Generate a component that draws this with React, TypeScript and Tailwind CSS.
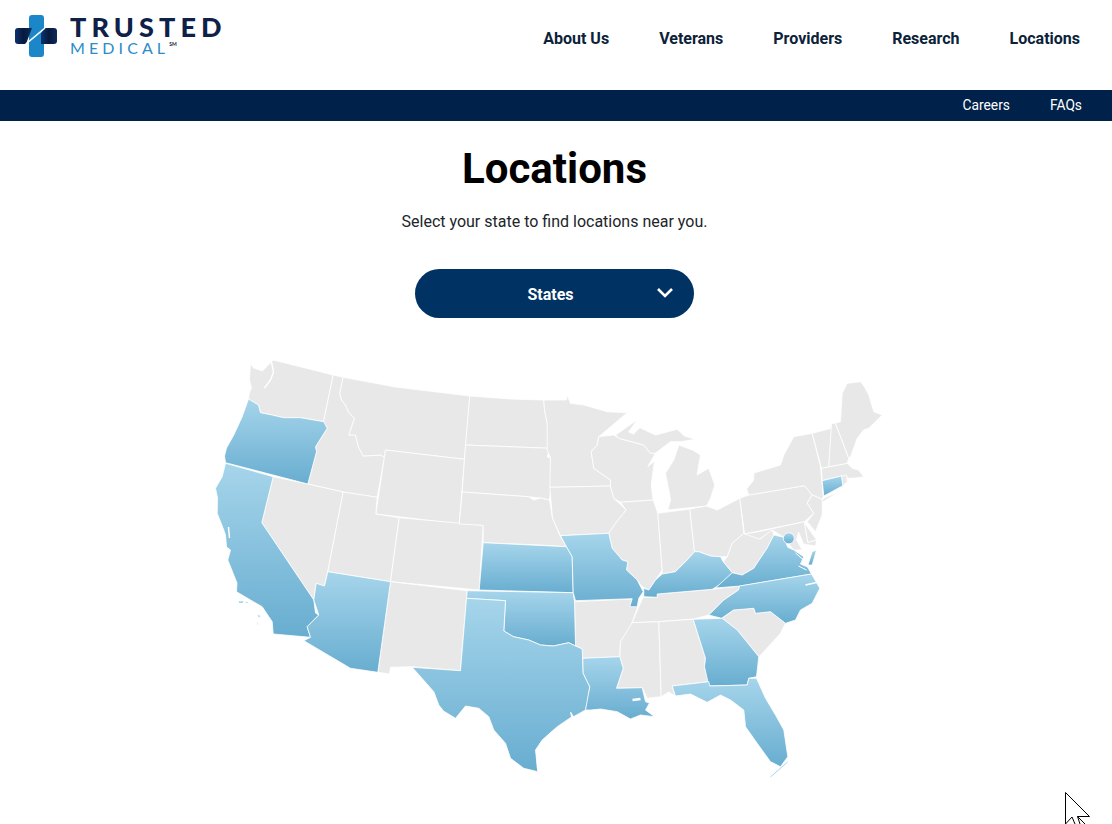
const font = { fontFamily: 'Roboto, sans-serif' };

const navLinks = ['About Us', 'Veterans', 'Providers', 'Research', 'Locations'];

// outlines are in page pixels, the svg viewBox starts where the svg sits on the page
const greyStates: string[] = [
  // WA
  '250,363 253,368 262,371 272.7,360 332.7,375 323,421.7 300,417.7 283,417.7 271.7,415 260,412.7 258,405 248,399 249,392 251,388 249,380',
  // ID
  '332.7,375 342.7,377.3 339.3,393.3 341,400 345,405 348,412 354,418.3 348.3,435 355,435 358,447 362.7,456 380,455 384,457.3 376.7,497.3 342.7,492 307.3,484 316,451.7 315,446.7 326.7,428.3 323,421.7',
  // MT
  '342.7,377.3 395,387 469.3,396 464,459.3 385,450 384,457.3 380,455 362.7,456 358,447 355,435 348.3,435 354,418.3 348,412 345,405 341,400 339.3,393.3',
  // WY
  '385,450 464,459.3 458.7,524 375.3,514',
  // NV
  '272.7,476.7 307.3,484 342.7,492 327.3,571.7 324,586 315.7,583.3 313.3,600 261.3,522.7',
  // UT
  '342.7,492 376.7,497.3 375.3,514 398.7,517.7 390,581.7 327.3,571.7',
  // CO
  '398.7,517.7 482.7,525.3 478.7,590 390,581.7',
  // NM
  '390,581.7 466.7,590.7 466,598.3 460,670.7 411.7,666.7 390,667.3 389,674 377.3,672.3',
  // ND
  '469.3,396 510,399 543.3,400 544,410 546.7,423 549.3,448.3 465,445',
  // SD
  '465,445 549.3,448.3 546.7,456.7 550,458 550,490 549,500 540,498 528,496.7 461.7,492',
  // NE
  '461.7,492 528,496.7 533.3,500 540,498 549,500 552,518 560,536.7 566,546.7 540,545 482.7,542.7 482.7,525.3 458.7,524',
  // MN
  '543.3,400 566,400 566,394 570,403.3 583.3,405 606.7,411.7 626.7,412.7 598.3,436.7 596.7,445 590.7,451.7 593.3,468.3 610,480 610,486 549.3,487.3 550,458 546.7,450 546.7,423 544,410',
  // IA
  '549.3,487.3 610,486 613.3,498.3 625.7,510 615,523.3 608.3,533.3 560,535.7 552,518',
  // WI
  '598.3,436.7 613.3,435 618.3,438.3 643.3,445 650,453.3 655,453 647.3,466.7 654,461 650.7,485 652.7,500 620,502.3 613.3,498.3 610,486 610,480 593.3,468.3 590.7,451.7 596.7,445',
  // MI upper
  '615,435 636.7,420 628,432 633,434 646.7,420.7 640,428 655,435 676.7,429.3 684,436 695,439.3 680,441.7 670,441.7 655,453 650,453.3 643.3,445 618.3,438.3',
  // MI lower
  '678.3,445 692,450 700,455 698,466 696.7,475 708.3,468.3 714.3,485 710,498.3 706,506 667.3,510 670,500 669.3,495 665,473.3 673.3,460',
  // IL
  '620,502.3 652.7,500 657.3,513.3 661.7,570 655,580 648.3,590 641.7,586.7 636.7,580 626,570 627.3,561.7 621.7,560 611.7,548.3 608.3,533.3 615,523.3 625.7,510',
  // IN
  '657.3,513.3 689.3,509 694,551.7 686.7,560 675,571.7 661.7,574 661.7,570',
  // OH
  '689.3,509 706,506 716.7,510 739.3,498.3 743.3,533.3 731.7,543.3 726.7,556.7 720,556.7 710,556 698.3,551.7 694,551.7',
  // AR
  '574,601.7 631.7,599 630,606 637.3,606.7 630,626.7 620,641.7 619.3,656.7 582.3,658.3 581.7,649 575,646',
  // TN
  '642.7,597.3 656.7,597.3 656.7,594 711.7,589.3 739,586 738,590 723.3,600 708.3,615 693.3,619 658.3,621.7 631.7,622.7 638.3,606.7',
  // MS
  '631.7,622.7 658.3,621.7 660.7,696.7 646.7,698.3 641.7,687.7 616,688.3 622.7,668.3 619.3,656.7 620,641.7',
  // AL
  '658.3,621.7 692.7,619.3 705,658.3 704,666.7 708,681.7 671.7,686 675,696 668,692 660.7,696.7',
  // SC
  '721.7,618.3 733,610 753,608.3 755,613.3 770,611.7 785,623.3 780,633.3 763.3,651.7 758.3,656.7 736.7,630',
  // WV
  '743.3,533.3 758.3,531.7 759.3,539.3 771.7,529.3 773.3,535 766.7,548 756.7,563 753.3,568.3 741.7,575 731.7,572.7 722.7,561.7 726.7,556.7 731.7,543.3',
  // PA
  '739.3,498.3 748.3,495 804,485.7 811.7,495 806.7,503 813.3,513.3 804,521.7 744,534',
  // NY
  '748.3,495 746,489 753.3,480 753.3,473 780,465 783.3,455 793.3,436.7 811.7,433.3 820,466.7 822.7,496.7 821.7,499.3 811.7,495 804,485.7',
  // Long Island
  '820,503.3 841.7,490 823.3,498.3',
  // NJ
  '811.7,495 821.7,499.3 821.7,515 815,531.7 806.7,521.7 813.3,513.3 806.7,503',
  // MD
  '744,534 758,531.7 804,521.7 807.3,542.3 816,540 815,546 803,544 798,532 796,540 801.7,550 793.3,550 783.3,537.3 771.7,530 759,539',
  // DE
  '804,522.7 816,540 807.3,542.3',
  // MA
  '821,468.3 846.7,463.3 851.7,468.3 858,470 863.3,476.7 855,478 848.3,478.3 841,476 821.7,480.7',
  // RI
  '841,476 846,475 846.7,481.7 842.3,485.7',
  // VT
  '811.7,433.3 831,428.3 828.3,466.7 821,468.3',
  // NH
  '831,423.3 835,423.3 848.3,458.3 846.7,463.3 828.3,466.7',
  // ME
  '835,423.3 840,421.7 841.7,393.3 846.7,383.3 860,381.7 864,387 868.3,395 873.3,411.7 881.7,415 868.3,428.3 863,430 856.7,438.3 850,456.7 848.3,458.3',
];

const blueStates: string[] = [
  // OR
  '248,399 258,405 260,412.7 271.7,415 283,417.7 300,417.7 323.3,421.7 326.7,428.3 315,446.7 316,451.7 307.3,484 225,462.7 224,456 226,448 233.3,435 241.7,416.7',
  // CA
  '225,463.3 272.7,476.7 261.3,522.7 313.3,600 315,613 318.3,615 306.7,626.7 310,637.3 272.7,634 271.7,621.7 261.7,606.7 250,600 236,591.7 236.5,583 227.3,560 230,550 226,547 225,535 223.3,530 216.7,513.3 217,498 215,488.3 221.7,476.7',
  // AZ
  '327.3,571.7 390,581.7 377.3,672.3 350,668.3 303.3,640.7 310,637.3 306.7,626.7 318.3,615 313.3,600 315.7,583.3 324,586',
  // KS
  '482.7,542.7 566,546.7 571.7,556.7 572.7,592.7 478.7,590',
  // OK
  '466.7,590.7 572.7,592.7 574,601.7 575,646 568.3,642.7 553,646 540,645 528.3,640 513,636.7 503.3,631 505,600.7 466,598.3',
  // TX
  '466,598.3 505,600.7 503.3,631 513,636.7 528.3,640 540,645 553,646 568.3,642.7 575,646 581.7,649 582.7,673.3 589.3,686.7 586.7,703.3 585,710 573,716.7 570,712 571,717 556.7,726.7 541.7,740 535,750 537.3,771.7 523.3,768.3 510,758.3 505,743.3 493.3,730 488.3,716.7 478.3,708.3 465,706 455,718.3 443,711 438.3,705 433.3,691.7 411.7,667.3 460,670.7',
  // LA
  '582.3,658.3 619.3,656.7 622.7,668.3 616,688.3 641.7,687.7 645,701.7 649,703 645,710 654,716.7 640,715 630,719 616.7,711.7 600,709 590,710 585,710 589.3,686.7 582.7,673.3',
  // MO
  '560,535.7 608.3,533.3 611.7,548.3 621.7,560 627.3,561.7 626,570 636.7,580 642.7,591.7 638.3,598.3 636.7,606.7 629.3,606.7 631.7,598.7 575,600.7 572.7,592.7 571.7,556.7 566,546.7',
  // KY
  '694,551.7 698.3,551.7 710,556 720,556.7 722.7,561.7 731.7,572.7 721.7,583.3 711.7,589.3 656.7,594 656.7,597.3 643.3,596.7 643.3,588.3 648.3,590 655,580 661.7,574 675,571.7 686.7,560',
  // VA
  '715,588 731.7,572.7 741.7,575 753.3,568.3 756.7,563 766.7,548 773.3,535 783.3,537.3 787.3,547.3 793.3,550 803.3,556.7 800,564 807,567 811,574 740,586',
  // VA eastern shore
  '811.7,551.7 816,550 811.7,565 807.5,565',
  // NC
  '739,586 811,574 819.3,588.3 811.7,603.3 800,610 795,620 785,623.3 770,611.7 755,613.3 753.3,608.3 733,610 721,618.3 708.3,615 723.3,600 738,590',
  // GA
  '692.7,619.3 721.7,618.3 736.7,630 758.3,656.7 756,676.7 748.3,678.3 746.7,685 708.3,686 704,666.7 705,658.3',
  // FL
  '671.7,686 708.3,681.7 709.3,686 746.7,685 748.3,678.3 756,678.3 765,698.3 775,715 783.3,730 787.3,756.7 780,766.7 770,761.7 756.7,743.3 745,726.7 743.3,710 730,700 720,695 706.7,702.3 690,694 675,696',
  // CT
  '821.7,480.7 841,476 842.3,485.7 823.3,496',
  // Channel Islands
  '238,601 243,601 243,603 238,603',
  '245,601.5 248,602 248,603 245,603',
  '257,614 260,616 258,618',
  '256,622 258,624 257,625',
];

export default function App() {
  return (
    <div className="relative h-[824px] w-[1112px] overflow-hidden bg-white" style={font}>
      <header className="flex h-[90px] items-start justify-between">
        <div className="flex pl-[15px] pt-[15px]">
          <svg width="43" height="43" viewBox="0 0 43 43">
            <defs>
              <linearGradient id="navyBar" x1="0" x2="1" y1="0" y2="0">
                <stop offset="0" stopColor="#0d3270" />
                <stop offset="0.5" stopColor="#071a3e" />
                <stop offset="1" stopColor="#0d2a5c" />
              </linearGradient>
            </defs>
            <rect x="14" y="0" width="15" height="42" rx="3" fill="#1b87c9" />
            <path d="M3 13 H17 L11 29 H3 Q0 29 0 26 V16 Q0 13 3 13 Z" fill="url(#navyBar)" />
            <path d="M29 13 H39 Q42 13 42 16 V26 Q42 29 39 29 H26 V19 Z" fill="url(#navyBar)" />
            <path d="M30 13 L11 29 L9 33" fill="none" stroke="#fff" strokeWidth="1.6" />
          </svg>
          <div className="ml-[12px] -mt-[1px] flex flex-col">
            <span
              className="text-[27px] leading-[26px] font-black tracking-[5.1px] text-[#0e2148]"
              style={{ fontFamily: 'Lato, sans-serif' }}
            >
              TRUSTED
            </span>
            <span
              className="flex items-start text-[16px] leading-[15px] font-normal tracking-[4.1px] text-[#2b8cc8]"
              style={{ fontFamily: 'Lato, sans-serif' }}
            >
              MEDICAL
              <span className="mt-[1px] text-[5px] leading-[6px] tracking-normal font-bold text-[#0e2148]">SM</span>
            </span>
          </div>
        </div>
        <nav className="flex gap-[50px] pr-[32px] pt-[29px]">
          {navLinks.map((link) => (
            <a key={link} className="text-[16px] leading-[19px] font-bold text-[#0b2239]">
              {link}
            </a>
          ))}
        </nav>
      </header>

      <div className="flex h-[31px] items-center justify-end gap-[40px] bg-[#00214a] pr-[30px] text-[13.8px] text-white">
        <a>Careers</a>
        <a>FAQs</a>
      </div>

      <main className="flex w-[1109px] flex-col items-center">
        <h1 className="mt-[24px] text-[42px] leading-[48px] font-bold text-black">Locations</h1>
        <p className="mt-[17px] text-[16px] leading-[24px] text-[#212529]">
          Select your state to find locations near you.
        </p>
        <button className="relative mt-[35px] flex h-[49px] w-[279px] items-center justify-center rounded-full bg-[#003263] pr-[8px] pt-[3px] text-[16px] font-bold text-white">
          States
          <svg
            className="absolute left-[242px] top-[18px]"
            width="16"
            height="11"
            viewBox="0 0 16 11"
            fill="none"
            stroke="#fff"
            strokeWidth="2.6"
          >
            <path d="M1 2 L8 9 L15 2" />
          </svg>
        </button>

        <svg className="mt-[32px] block" width="700" height="440" viewBox="204.5 350 700 440">
          <defs>
            <linearGradient id="stateBlue" x1="0" x2="0" y1="0" y2="1">
              <stop offset="0" stopColor="#a6d5eb" />
              <stop offset="1" stopColor="#68add0" />
            </linearGradient>
          </defs>
          <g fill="#e8e8e8" stroke="#fff" strokeWidth="0.8" strokeLinejoin="round">
            {greyStates.map((points) => (
              <polygon key={points} points={points} />
            ))}
          </g>
          <g fill="url(#stateBlue)" stroke="#fff" strokeWidth="0.8" strokeLinejoin="round">
            {blueStates.map((points) => (
              <polygon key={points} points={points} />
            ))}
            <circle cx="788.3" cy="538.3" r="5.5" />
          </g>
          {/* Puget Sound, inlets, lagoons */}
          <g fill="none" stroke="#fff" strokeWidth="1">
            <path d="M271 362 L273 372 L270 380 L264 388" strokeWidth="1.5" />
            <path d="M228 527 L229 538" strokeWidth="1.5" />
            <path d="M795 553 L803 560 M798 566 L806 570" />
            <path d="M805 585 L818 582" strokeWidth="1.5" />
            <path d="M632 700 L640 699" strokeWidth="2.5" />
            <path d="M536 750 L537 770 M541 742 L552 731" />
            <path d="M770 777 L787 762" stroke="#a6d5eb" />
          </g>
        </svg>
      </main>

      {/* mouse pointer caught in the screenshot */}
      <svg className="absolute left-[1060px] top-[788px]" width="36" height="36" viewBox="0 0 36 36">
        <path
          d="M5.5 4.5 L5.5 36 M5.5 4.5 L29.5 28.5 L17.5 28.5 L25 36 M5.5 36 L12 29 L15 36 M17.5 28.5 L20 36"
          fill="#fff"
          stroke="#000"
          strokeWidth="1"
        />
      </svg>
    </div>
  );
}
